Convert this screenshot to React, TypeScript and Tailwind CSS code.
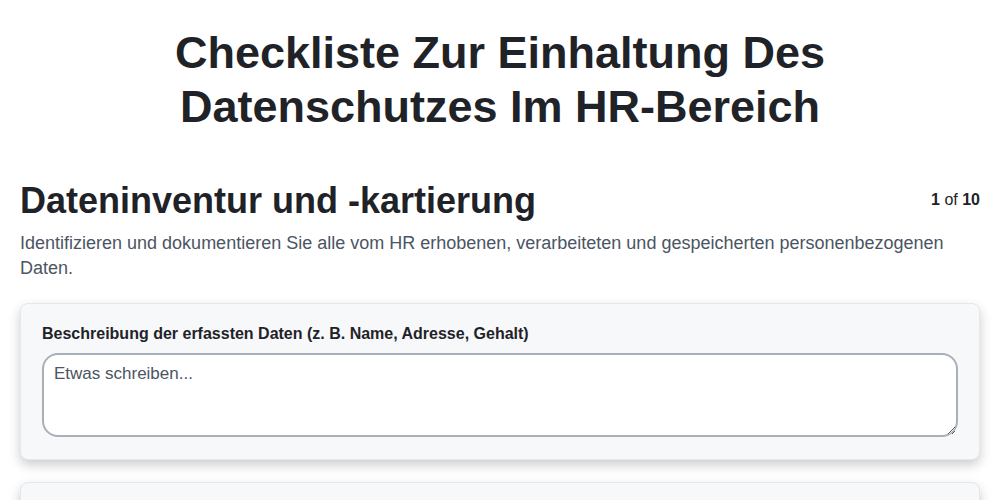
export default function App(): React.JSX.Element {
  return (
    <div className="min-h-screen bg-white px-5 font-['Liberation_Sans',Arial,sans-serif] text-[#1f2328]">
      <h1 className="mx-auto max-w-[700px] pt-[26px] text-center text-[45px] font-bold leading-[54px]">
        Checkliste Zur Einhaltung Des Datenschutzes Im HR-Bereich
      </h1>
      <div className="mt-[47px] flex items-start justify-between">
        <h2 className="text-[36px] font-bold leading-[40px]">Dateninventur und -kartierung</h2>
        <div className="pt-[7px] text-[16px]">
          <span className="font-bold">1</span> of <span className="font-bold">10</span>
        </div>
      </div>
      <p className="mt-[10px] text-[18px] leading-[25px] text-[#4b5563]">
        Identifizieren und dokumentieren Sie alle vom HR erhobenen, verarbeiteten und gespeicherten personenbezogenen
        Daten.
      </p>
      <div className="mt-[22px] flex flex-col gap-[22px]">
        <div className="rounded-lg border border-[#e5e7eb] bg-[#f7f8fa] px-[21px] pb-[22px] pt-[20px] shadow-[0_5px_12px_rgba(0,0,0,0.2)]">
          <label className="block text-[16px] font-bold leading-[20px]">
            Beschreibung der erfassten Daten (z. B. Name, Adresse, Gehalt)
          </label>
          <textarea
            placeholder="Etwas schreiben..."
            className="mt-[9px] block h-[84px] w-full rounded-2xl border-2 border-[#a8b0b9] bg-white px-[10px] py-[8px] text-[17px] leading-[22px] placeholder:text-[#4b5563] focus:outline-none"
          />
        </div>
        <div className="h-[80px] rounded-lg border border-[#e5e7eb] bg-[#f7f8fa] shadow-[0_5px_12px_rgba(0,0,0,0.2)]" />
      </div>
    </div>
  );
}
